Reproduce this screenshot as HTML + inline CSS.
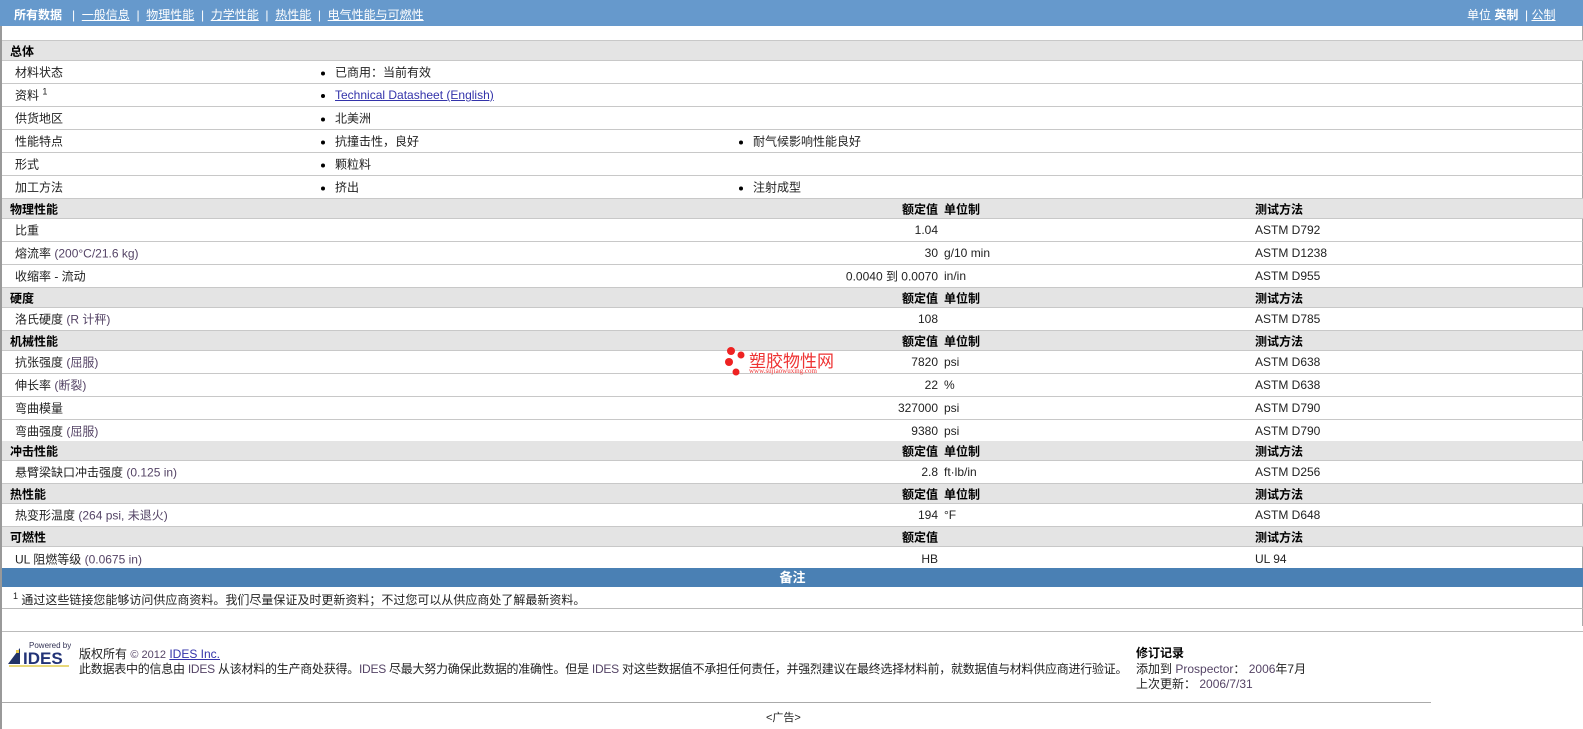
<!DOCTYPE html>
<html><head><meta charset="utf-8">
<style>
*{margin:0;padding:0;box-sizing:border-box}
body{width:1583px;height:729px;overflow:hidden;background:#fff;font-family:"Liberation Sans","Noto Sans CJK SC",sans-serif;font-size:12px;color:#222;position:relative}
.a{position:absolute;white-space:nowrap}
.bar{position:absolute;left:0;top:0;width:1583px;height:26px;background:#6699cc;color:#fff}
.bar a{color:#fff;text-decoration:underline}
.r{position:absolute;left:2px;width:1581px;border-bottom:1px solid #c8c8c8}
.h{background:#e4e4e4;font-weight:bold;color:#000;height:20px}
.d{height:23px}
.t{position:absolute;top:50%;transform:translateY(-50%);white-space:nowrap}
.v{right:645px;text-align:right}
.u{left:942px}
.m{left:1253px}
.l{left:13px}
.hl{left:8px}
.b1{left:319px}.b2{left:737px}
.dot{display:inline-block;width:4px;height:4px;background:#000;border-radius:2px;vertical-align:middle;margin-right:10px}
.g{color:#554466}
</style></head><body>
<div style="position:absolute;left:0;top:26px;width:2px;height:703px;background:#999"></div>
<div style="position:absolute;right:0;top:26px;width:1px;height:600px;background:#aaa"></div>
<div class="bar">
<span class="a" style="left:14px;top:6px;font-weight:bold">所有数据</span>
<span class="a" style="left:72px;top:6px">|&nbsp; <a>一般信息</a> &nbsp;|&nbsp; <a>物理性能</a> &nbsp;|&nbsp; <a>力学性能</a> &nbsp;|&nbsp; <a>热性能</a> &nbsp;|&nbsp; <a>电气性能与可燃性</a></span>
<span class="a" style="left:1467px;top:6px">单位 <b>英制</b> &nbsp;| <a>公制</a></span>
</div>
<div class="r" style="top:40px;height:1px;border:0;background:#c8c8c8"></div>

<div class="r h" style="top:41px"><span class="t hl">总体</span></div>
<div class="r d" style="top:61px"><span class="t l">材料状态</span><span class="t b1"><i class="dot"></i>已商用：当前有效</span></div>
<div class="r d" style="top:84px"><span class="t l">资料 <sup style="font-size:9px">1</sup></span><span class="t b1"><i class="dot"></i><a style="color:#3333aa;text-decoration:underline">Technical Datasheet (English)</a></span></div>
<div class="r d" style="top:107px"><span class="t l">供货地区</span><span class="t b1"><i class="dot"></i>北美洲</span></div>
<div class="r d" style="top:130px"><span class="t l">性能特点</span><span class="t b1"><i class="dot"></i>抗撞击性，良好</span><span class="t b2"><i class="dot"></i>耐气候影响性能良好</span></div>
<div class="r d" style="top:153px"><span class="t l">形式</span><span class="t b1"><i class="dot"></i>颗粒料</span></div>
<div class="r d" style="top:176px"><span class="t l">加工方法</span><span class="t b1"><i class="dot"></i>挤出</span><span class="t b2"><i class="dot"></i>注射成型</span></div>

<div class="r h" style="top:199px"><span class="t hl">物理性能</span><span class="t v">额定值</span><span class="t u">单位制</span><span class="t m">测试方法</span></div>
<div class="r d" style="top:219px"><span class="t l">比重</span><span class="t v">1.04</span><span class="t m">ASTM D792</span></div>
<div class="r d" style="top:242px"><span class="t l">熔流率 <span class="g">(200°C/21.6 kg)</span></span><span class="t v">30</span><span class="t u">g/10 min</span><span class="t m">ASTM D1238</span></div>
<div class="r d" style="top:265px"><span class="t l">收缩率 - 流动</span><span class="t v">0.0040 到 0.0070</span><span class="t u">in/in</span><span class="t m">ASTM D955</span></div>

<div class="r h" style="top:288px"><span class="t hl">硬度</span><span class="t v">额定值</span><span class="t u">单位制</span><span class="t m">测试方法</span></div>
<div class="r d" style="top:308px"><span class="t l">洛氏硬度 <span class="g">(R 计秤)</span></span><span class="t v">108</span><span class="t m">ASTM D785</span></div>

<div class="r h" style="top:331px"><span class="t hl">机械性能</span><span class="t v">额定值</span><span class="t u">单位制</span><span class="t m">测试方法</span></div>
<div class="r d" style="top:351px"><span class="t l">抗张强度 <span class="g">(屈服)</span></span><span class="t v">7820</span><span class="t u">psi</span><span class="t m">ASTM D638</span></div>
<div class="r d" style="top:374px"><span class="t l">伸长率 <span class="g">(断裂)</span></span><span class="t v">22</span><span class="t u">%</span><span class="t m">ASTM D638</span></div>
<div class="r d" style="top:397px"><span class="t l">弯曲模量</span><span class="t v">327000</span><span class="t u">psi</span><span class="t m">ASTM D790</span></div>
<div class="r d" style="top:420px"><span class="t l">弯曲强度 <span class="g">(屈服)</span></span><span class="t v">9380</span><span class="t u">psi</span><span class="t m">ASTM D790</span></div>

<div class="r h" style="top:441px"><span class="t hl">冲击性能</span><span class="t v">额定值</span><span class="t u">单位制</span><span class="t m">测试方法</span></div>
<div class="r d" style="top:461px"><span class="t l">悬臂梁缺口冲击强度 <span class="g">(0.125 in)</span></span><span class="t v">2.8</span><span class="t u">ft·lb/in</span><span class="t m">ASTM D256</span></div>

<div class="r h" style="top:484px"><span class="t hl">热性能</span><span class="t v">额定值</span><span class="t u">单位制</span><span class="t m">测试方法</span></div>
<div class="r d" style="top:504px"><span class="t l">热变形温度 <span class="g">(264 psi, 未退火)</span></span><span class="t v">194</span><span class="t u">°F</span><span class="t m">ASTM D648</span></div>

<div class="r h" style="top:527px"><span class="t hl">可燃性</span><span class="t v">额定值</span><span class="t m">测试方法</span></div>
<div class="r d" style="top:547px;border-bottom:0"><span class="t l">UL 阻燃等级 <span class="g">(0.0675 in)</span></span><span class="t v">HB</span><span class="t m">UL 94</span></div>

<div class="a" style="left:2px;top:568px;width:1581px;height:19px;background:#4a80b4;color:#fff;font-weight:bold;text-align:center;font-size:13px;line-height:19px">备注</div>
<div class="a" style="left:13px;top:591px"><sup style="font-size:9px">1</sup> 通过这些链接您能够访问供应商资料。我们尽量保证及时更新资料；不过您可以从供应商处了解最新资料。</div>
<div class="a" style="left:2px;top:608px;width:1581px;height:1px;background:#bbb"></div>
<div class="a" style="left:2px;top:631px;width:1581px;height:1px;background:#bbb"></div>

<!-- watermark -->
<div class="a" style="left:724px;top:346px">
<svg width="26" height="30"><circle cx="7" cy="5" r="4" fill="#e22"/><circle cx="17" cy="9" r="3.5" fill="#e22"/><circle cx="5" cy="16" r="4" fill="#e22"/><circle cx="12" cy="26" r="3.5" fill="#e22"/></svg></div>
<div class="a" style="left:749px;top:347px;color:#e33;font-size:17px">塑胶物性网</div>
<div class="a" style="left:749px;top:367px;color:#e33;font-size:7px;font-family:'Liberation Serif',serif">www.sujiaowuxing.com</div>

<!-- footer -->
<svg class="a" style="left:7px;top:640px" width="64" height="28">
<text x="22" y="8" font-size="8" fill="#335" font-family="Liberation Sans">Powered by</text>
<polygon points="1,24 13,8 13,24" fill="#223366"/>
<rect x="9" y="10" width="3" height="3" fill="#e8c84a"/>
<text x="16" y="24" font-size="17" font-weight="bold" fill="#223377" font-family="Liberation Sans">IDES</text>
<rect x="2" y="25" width="60" height="2" fill="#e8d87a"/>
</svg>
<div class="a" style="left:79px;top:645px">版权所有 <span class="g" style="font-size:11px">© 2012</span> <a style="color:#3333aa;text-decoration:underline">IDES Inc.</a></div>
<div class="a" style="left:79px;top:660px;letter-spacing:-0.25px">此数据表中的信息由 <span class="g">IDES</span> 从该材料的生产商处获得。<span class="g">IDES</span> 尽最大努力确保此数据的准确性。但是 <span class="g">IDES</span> 对这些数据值不承担任何责任，并强烈建议在最终选择材料前，就数据值与材料供应商进行验证。</div>
<div class="a" style="left:1136px;top:644px;font-weight:bold;color:#000">修订记录</div>
<div class="a" style="left:1136px;top:660px">添加到 <span class="g">Prospector</span>： <span class="g">2006</span>年7月</div>
<div class="a" style="left:1136px;top:675px">上次更新： <span class="g">2006/7/31</span></div>
<div class="a" style="left:2px;top:702px;width:1429px;height:1px;background:#aaa"></div>
<div class="a" style="left:766px;top:709px;font-size:11px">&lt;广告&gt;</div>
</body></html>
